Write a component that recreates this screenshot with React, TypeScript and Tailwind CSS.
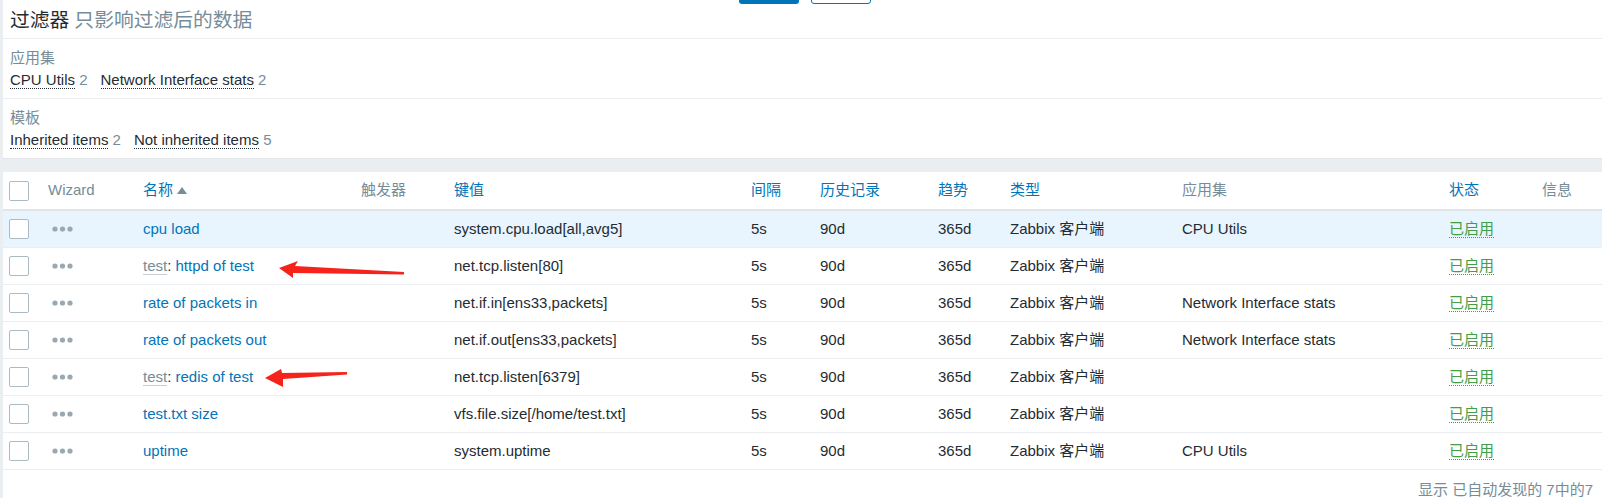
const rows = [
  { prefix: '', name: 'cpu load', key: 'system.cpu.load[all,avg5]', app: 'CPU Utils', active: true },
  { prefix: 'test', name: 'httpd of test', key: 'net.tcp.listen[80]', app: '' },
  { prefix: '', name: 'rate of packets in', key: 'net.if.in[ens33,packets]', app: 'Network Interface stats' },
  { prefix: '', name: 'rate of packets out', key: 'net.if.out[ens33,packets]', app: 'Network Interface stats' },
  { prefix: 'test', name: 'redis of test', key: 'net.tcp.listen[6379]', app: '' },
  { prefix: '', name: 'test.txt size', key: 'vfs.file.size[/home/test.txt]', app: '' },
  { prefix: '', name: 'uptime', key: 'system.uptime', app: 'CPU Utils' },
]

const gridCols =
  'grid grid-cols-[39px_95px_218px_93px_297px_69px_118px_72px_172px_267px_93px_1fr] items-center pl-[6px]'

function Checkbox() {
  return <span className="block w-[20px] h-[20px] rounded-[2px] border border-[#acbbc2] bg-white" />
}

function Dots() {
  return (
    <svg width="22" height="6" viewBox="0 0 22 6" className="ml-[4px]">
      <circle cx="3" cy="3" r="2.6" fill="#9aa8b1" />
      <circle cx="10.5" cy="3" r="2.6" fill="#9aa8b1" />
      <circle cx="18" cy="3" r="2.6" fill="#9aa8b1" />
    </svg>
  )
}

function FilterTag({ label, count }: { label: string; count: number }) {
  return (
    <span className="mr-[13px]">
      <span className="border-b border-dotted border-[#1f2c33]">{label}</span>
      <span className="text-[#768d99]"> {count}</span>
    </span>
  )
}

export default function App() {
  return (
    <div
      className="relative w-[1602px] h-[498px] overflow-hidden bg-[#ebeef0] pl-[3px] text-[15px] text-[#1f2c33]"
      style={{ fontFamily: '"Liberation Sans", Arial, "Noto Sans CJK SC", sans-serif' }}
    >
      {/* Filter */}
      <div className="bg-white">
        <div className="h-[4px] overflow-hidden flex items-end pl-[736px] gap-[12px]">
          <span className="block w-[60px] h-[20px] rounded-[3px] bg-[#0275b8]" />
          <span className="block w-[60px] h-[20px] rounded-[3px] border border-[#0275b8] bg-white" />
        </div>
        <div className="h-[35px] flex items-center pl-[7px] text-[19.8px] border-b border-[#ebeef0]">
          <span className="text-[#1f2c33]">过滤器</span>
          <span className="ml-[5px] text-[#768d99]">只影响过滤后的数据</span>
        </div>
        <div className="h-[60px] pl-[7px] pt-[10px] border-b border-[#ebeef0]">
          <div className="leading-[18px] text-[#768d99]">应用集</div>
          <div className="mt-[4px] leading-[18px]">
            <FilterTag label="CPU Utils" count={2} />
            <FilterTag label="Network Interface stats" count={2} />
          </div>
        </div>
        <div className="h-[60px] pl-[7px] pt-[10px] border-b border-[#e2e6e9]">
          <div className="leading-[18px] text-[#768d99]">模板</div>
          <div className="mt-[4px] leading-[18px]">
            <FilterTag label="Inherited items" count={2} />
            <FilterTag label="Not inherited items" count={5} />
          </div>
        </div>
      </div>

      <div className="h-[13px]" />

      {/* Items table */}
      <div className="bg-white">
        <div className={`${gridCols} h-[39px] border-b-2 border-[#dfe4e7]`}>
          <Checkbox />
          <span className="text-[#768d99]">Wizard</span>
          <span className="flex items-center text-[#0275b8]">
            名称
            <svg width="10" height="7" viewBox="0 0 10 7" className="ml-[4px]">
              <path d="M0 7 L5 0 L10 7 Z" fill="#768d99" />
            </svg>
          </span>
          <span className="text-[#768d99]">触发器</span>
          <span className="text-[#0275b8]">键值</span>
          <span className="text-[#0275b8]">间隔</span>
          <span className="text-[#0275b8]">历史记录</span>
          <span className="text-[#0275b8]">趋势</span>
          <span className="text-[#0275b8]">类型</span>
          <span className="text-[#768d99]">应用集</span>
          <span className="text-[#0275b8]">状态</span>
          <span className="text-[#768d99]">信息</span>
        </div>

        {rows.map((r, i) => (
          <div
            key={i}
            className={`${gridCols} h-[37px] border-b border-[#ebeef0] ${r.active ? 'bg-[#e8f5ff]' : ''}`}
          >
            <Checkbox />
            <Dots />
            <span className="whitespace-nowrap">
              {r.prefix && (
                <>
                  <span className="text-[#768d99] border-b border-[#c5ced3]">{r.prefix}</span>
                  <span>: </span>
                </>
              )}
              <span className="text-[#0275b8]">{r.name}</span>
            </span>
            <span />
            <span className="whitespace-nowrap">{r.key}</span>
            <span>5s</span>
            <span>90d</span>
            <span>365d</span>
            <span className="whitespace-nowrap">Zabbix 客户端</span>
            <span className="whitespace-nowrap">{r.app}</span>
            <span>
              <span className="text-[#429e47] border-b border-dotted border-[#429e47]">已启用</span>
            </span>
            <span />
          </div>
        ))}

        <div className="h-[29px] flex items-end justify-end pr-[9px] text-[#768d99] leading-[18px]">
          显示 已自动发现的 7中的7
        </div>
      </div>

      {/* annotation arrows */}
      <svg className="absolute left-0 top-0 pointer-events-none" width="1602" height="498" viewBox="0 0 1602 498">
        <polygon
          points="279,268 298,261 295,266 404,272 404,274.5 293,273 293,278"
          fill="#f5231a"
        />
        <polygon
          points="265,378 281,369 282,373 347,372 347,374.5 283,379 283,387"
          fill="#f5231a"
        />
      </svg>
    </div>
  )
}
